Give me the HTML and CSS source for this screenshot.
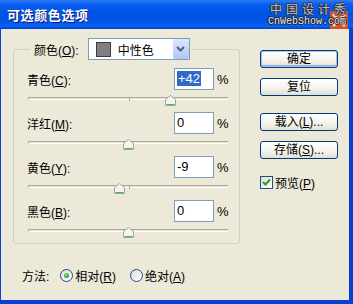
FILE: index.html
```html
<!DOCTYPE html>
<html lang="zh-CN">
  <head>
    <meta charset="UTF-8" />
    <title>可选颜色选项</title>
    <link rel="stylesheet" href="styles.css">
  </head>
  <body>
    <div class="window">
      <!-- 标题栏 -->
      <div class="titlebar">
        <span class="title">可选颜色选项</span>
        <div class="watermark">
          <svg class="watermark-logo" width="18" height="18" viewBox="0 0 18 18">
            <rect x="0" y="0" width="18" height="18" fill="#d8502a" />
            <path d="M3 3 L15 15 M15 3 L3 15" stroke="#f4d2c4" stroke-width="3" />
          </svg>
          <span class="watermark-cn">中国设计秀</span>
          <span class="watermark-en">CnWebShow.com</span>
        </div>
      </div>

      <div class="client">
        <div class="main">
          <fieldset class="group">
            <legend class="group-legend">
              <span class="label">颜色(<u>O</u>):</span>
              <div class="select">
                <span class="swatch"></span>
                <span class="select-text">中性色</span>
                <span class="select-btn">
                  <svg width="9" height="6" viewBox="0 0 9 6">
                    <path d="M1 1 L4.5 4.5 L8 1" fill="none" stroke="#4d6185" stroke-width="2" />
                  </svg>
                </span>
              </div>
            </legend>

            <div class="channels">
              <div class="channel">
                <div class="channel-head">
                  <span class="label">青色(<u>C</u>):</span>
                  <div class="field"><span class="selected">+42</span></div>
                  <span class="pct">%</span>
                </div>
                <div class="slider">
                  <div class="track"><span class="tick"></span></div>
                  <span class="thumb" style="left: calc(71% - 5px)"></span>
                </div>
              </div>

              <div class="channel">
                <div class="channel-head">
                  <span class="label">洋红(<u>M</u>):</span>
                  <div class="field">0</div>
                  <span class="pct">%</span>
                </div>
                <div class="slider">
                  <div class="track"><span class="tick"></span></div>
                  <span class="thumb" style="left: calc(50% - 5px)"></span>
                </div>
              </div>

              <div class="channel">
                <div class="channel-head">
                  <span class="label">黄色(<u>Y</u>):</span>
                  <div class="field">-9</div>
                  <span class="pct">%</span>
                </div>
                <div class="slider">
                  <div class="track"><span class="tick"></span></div>
                  <span class="thumb" style="left: calc(45.5% - 5px)"></span>
                </div>
              </div>

              <div class="channel">
                <div class="channel-head">
                  <span class="label">黑色(<u>B</u>):</span>
                  <div class="field">0</div>
                  <span class="pct">%</span>
                </div>
                <div class="slider">
                  <div class="track"><span class="tick"></span></div>
                  <span class="thumb" style="left: calc(50% - 5px)"></span>
                </div>
              </div>
            </div>
          </fieldset>

          <!-- 方法 -->
          <div class="method">
            <span class="method-label">方法:</span>
            <span class="radio checked"></span>
            <span class="radio-text">相对(<u>R</u>)</span>
            <span class="radio"></span>
            <span class="radio-text">绝对(<u>A</u>)</span>
          </div>
        </div>

        <!-- 按钮 -->
        <div class="side">
          <button class="btn btn-default">确定</button>
          <button class="btn">复位</button>
          <button class="btn btn-gap">载入(<u>L</u>)...</button>
          <button class="btn">存储(<u>S</u>)...</button>
          <div class="preview">
            <span class="checkbox">
              <svg width="11" height="11" viewBox="0 0 11 11">
                <path d="M2 5 L4.5 7.5 L9 2.5" fill="none" stroke="#21a121" stroke-width="2" />
              </svg>
            </span>
            <span class="preview-text">预览(<u>P</u>)</span>
          </div>
        </div>
      </div>
    </div>
  </body>
</html>
```

FILE: styles.css
```css
body {
  margin: 0;
  font-family: "Liberation Sans", "Noto Sans CJK SC", sans-serif;
  font-size: 12px;
  color: #000;
  background-color: #ece9d8;
}

.window {
  width: 353px;
  height: 304px;
  overflow: hidden;
}

.titlebar {
  position: relative;
  height: 29px;
  background: linear-gradient(to bottom, #2c7cf6 0%, #0a5ef0 15%, #0054e3 45%, #0056e8 75%, #0a62f6 90%, #0040c8 100%);
  display: flex;
  align-items: center;
  padding-left: 7px;
}

.title {
  color: #fff;
  font-family: "Noto Sans CJK SC", sans-serif;
  font-weight: bold;
  font-size: 13px;
  letter-spacing: 0.6px;
  text-shadow: 1px 1px 0 #0a1a7a;
}

.watermark {
  position: absolute;
  top: 2px;
  right: 3px;
  width: 82px;
  height: 27px;
}

.watermark-logo {
  position: absolute;
  right: 2px;
  top: 9px;
}

.watermark-cn {
  position: absolute;
  top: 0;
  left: 2px;
  font-family: "Noto Sans CJK SC", sans-serif;
  font-size: 12px;
  line-height: 14px;
  letter-spacing: 4px;
  color: #b8bcc8;
  text-shadow: 1px 0 0 #333, -1px 0 0 #333, 0 1px 0 #333, 0 -1px 0 #333;
}

.watermark-en {
  position: absolute;
  top: 14px;
  left: 0;
  font-family: "Liberation Mono", monospace;
  font-size: 10px;
  line-height: 12px;
  color: #e8e8e8;
  text-shadow: 1px 0 0 #222, -1px 0 0 #222, 0 1px 0 #222, 0 -1px 0 #222;
}

.client {
  display: flex;
  height: 275px;
  padding: 9px 0 0 12px;
  box-sizing: border-box;
  border-left: 1px solid #0842d8;
  border-right: 4px solid #0a3fd2;
  border-bottom: 4px solid #0a3fd2;
}

.main {
  width: 227px;
}

.group {
  margin: 0;
  padding: 0;
  border: 1px solid #d0d0bf;
  border-radius: 3px;
  height: 206px;
  box-sizing: border-box;
}

.group-legend {
  display: flex;
  align-items: center;
  margin-left: 16px;
  padding: 0 3px 0 4px;
  height: 22px;
}

.label {
  white-space: nowrap;
}

.group-legend .label {
  margin-right: 9px;
}

.select {
  display: flex;
  align-items: center;
  width: 102px;
  height: 22px;
  box-sizing: border-box;
  border: 1px solid #7f9db9;
  background-color: #fff;
}

.swatch {
  width: 15px;
  height: 15px;
  box-sizing: border-box;
  margin-left: 7px;
  border: 1px solid #3c3c3c;
  background-color: #808080;
}

.select-text {
  margin-left: 7px;
  flex: 1;
}

.select-btn {
  display: flex;
  align-items: center;
  justify-content: center;
  width: 16px;
  height: 20px;
  background: linear-gradient(to bottom, #dce6fd, #c1d3fb 60%, #b0c6f6);
  border-radius: 2px;
}

.channels {
  padding: 8px 11px 0 13px;
  display: flex;
  flex-direction: column;
  gap: 3px;
}

.channel-head {
  display: flex;
  align-items: center;
  height: 22px;
}

.channel-head .label {
  flex: 1;
}

.field {
  width: 40px;
  height: 22px;
  box-sizing: border-box;
  border: 1px solid #7f9db9;
  background-color: #fff;
  padding: 3px 0 0 2px;
  font-size: 13px;
  line-height: 14px;
}

.selected {
  background-color: #316ac5;
  color: #fff;
  padding: 0 1px;
}

.pct {
  width: 14px;
  padding-left: 3px;
  box-sizing: border-box;
  font-size: 13px;
}

.slider {
  position: relative;
  height: 19px;
  padding-top: 7px;
  box-sizing: border-box;
  margin-left: 1px;
}

.track {
  position: relative;
  height: 1px;
  border-top: 1px solid #aca899;
  border-bottom: 1px solid #fff;
  background-color: #e6e3d3;
  border-left: 1px solid #aca899;
}

.tick {
  position: absolute;
  left: 50%;
  top: -1px;
  width: 1px;
  height: 4px;
  background-color: #aca899;
}

.thumb {
  position: absolute;
  top: 5px;
  width: 11px;
  height: 11px;
  background: url("data:image/svg+xml;utf8,<svg xmlns='http://www.w3.org/2000/svg' width='11' height='11'><path d='M0.5 10.5 V4.5 L5.5 0.5 L10.5 4.5 V10.5 Z' fill='%23f3f3ef' stroke='%23a6a79c'/><path d='M1.5 9.5 H9.5' stroke='%2346b946' stroke-width='1'/></svg>") no-repeat;
}

.method {
  display: flex;
  align-items: center;
  height: 16px;
  margin-top: 23px;
  padding-left: 9px;
}

.method-label {
  margin-right: 11px;
}

.radio {
  width: 13px;
  height: 13px;
  box-sizing: border-box;
  border: 1px solid #1c5180;
  border-radius: 50%;
  background: linear-gradient(135deg, #dcdcd7, #fff);
  display: flex;
  align-items: center;
  justify-content: center;
}

.radio.checked::after {
  content: "";
  width: 5px;
  height: 5px;
  border-radius: 50%;
  background: radial-gradient(circle at 40% 35%, #8ee08a, #21a121 70%);
}

.radio-text {
  margin-left: 2px;
  margin-right: 14px;
}

.side {
  display: flex;
  flex-direction: column;
  margin-left: 20px;
  padding-top: 12px;
}

.btn {
  width: 78px;
  height: 18px;
  margin: 0 0 10px 0;
  padding: 0;
  border: 1px solid #003c74;
  border-radius: 3px;
  background: linear-gradient(to bottom, #fff, #f3f2ec 60%, #e2dfd3);
  font-family: "Liberation Sans", "Noto Sans CJK SC", sans-serif;
  font-size: 12px;
  line-height: 14px;
  color: #000;
}

.btn-default {
  box-shadow: inset 0 0 0 1px #a9c3f0, inset 0 -1px 0 1px #89aded;
}

.btn-gap {
  margin-top: 7px;
}

.preview {
  display: flex;
  align-items: center;
  margin-top: 5px;
}

.checkbox {
  width: 13px;
  height: 13px;
  box-sizing: border-box;
  border: 1px solid #1c5180;
  background: linear-gradient(135deg, #dcdcd7, #fff);
  display: flex;
  align-items: center;
  justify-content: center;
}

.preview-text {
  margin-left: 2px;
}
```
